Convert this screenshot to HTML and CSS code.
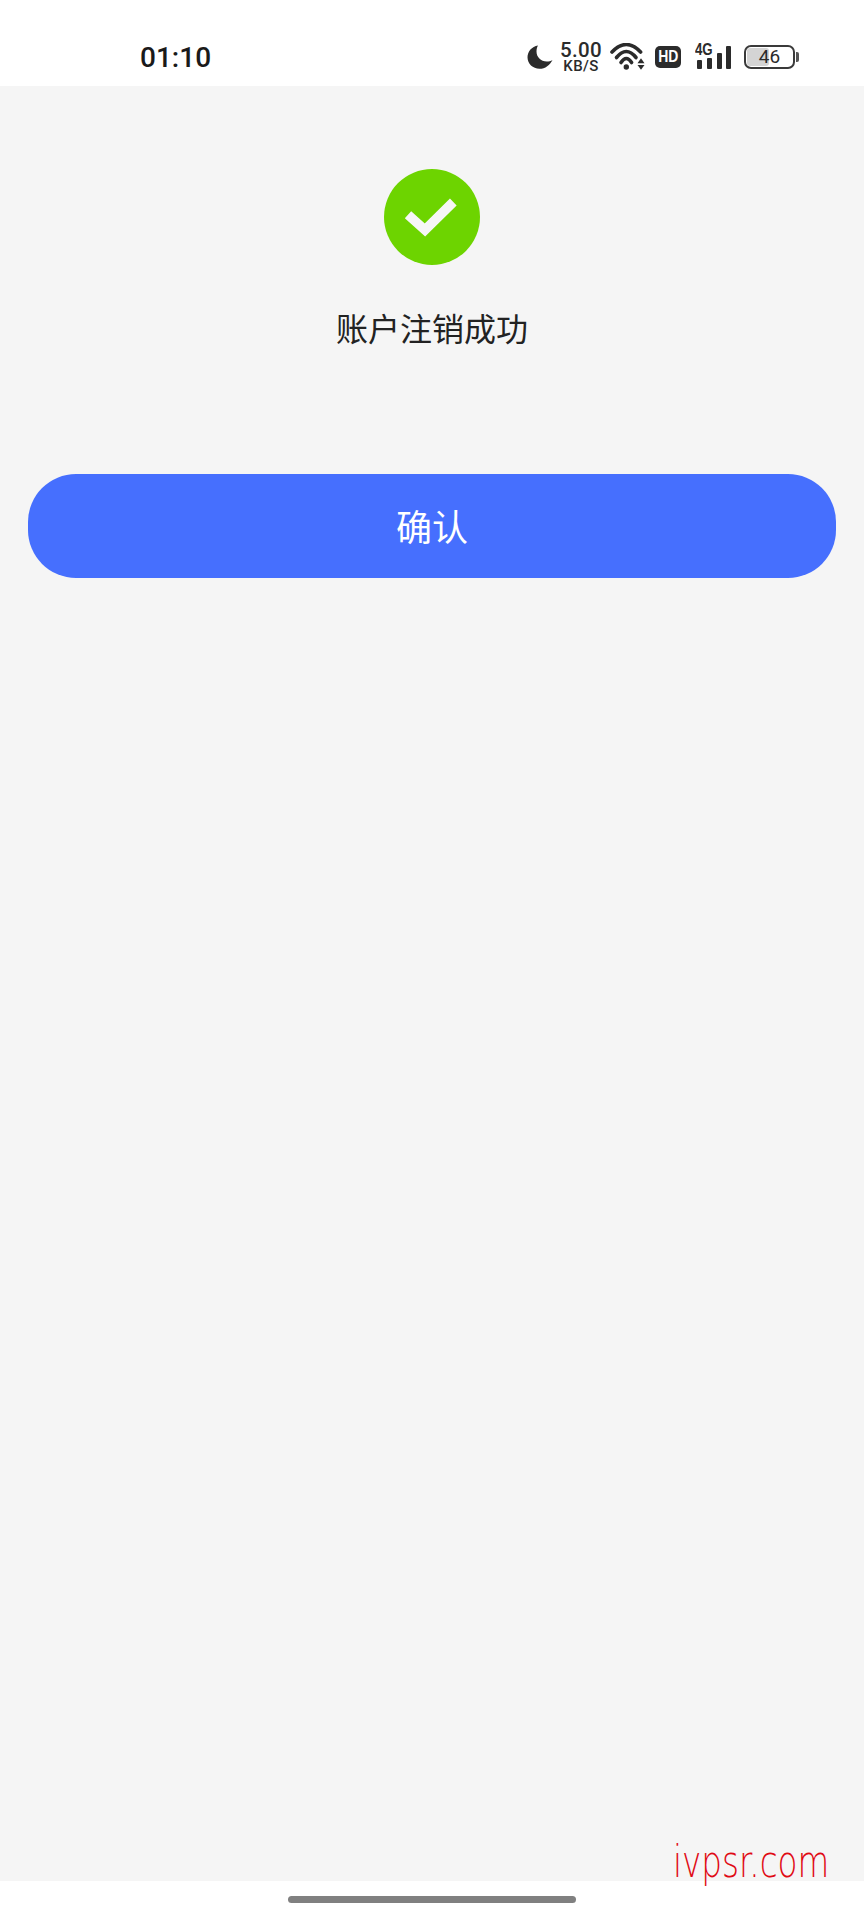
FILE: index.html
```html
<!DOCTYPE html>
<html lang="zh">

<head>
    <meta charset="utf-8">
    <title>账户注销成功</title>
    <link rel="stylesheet" href="styles.css">
</head>

<body>
    <div class="page">
        <div class="status-bar">
            <span class="clock">01:10</span>
            <div class="status-icons">
                <svg class="icon-moon" width="26" height="24" viewBox="0 0 26 24">
                    <path d="M11 0.5 C4.8 1.5 0.5 6.5 0.5 12.3 C0.5 18.8 5.8 23.8 12.5 23.8 C18.2 23.8 23 20.2 25.5 15 C23.8 16 21.8 16.5 19.8 16.5 C13.8 16.5 9.5 12 9.5 6.5 C9.5 4.2 10 2.2 11 0.5 Z" />
                </svg>
                <div class="speed">
                    <span class="speed-value">5.00</span>
                    <span class="speed-unit">KB/S</span>
                </div>
                <svg class="icon-wifi" width="36" height="28" viewBox="0 0 36 28">
                    <path class="arc" d="M2 9 Q16.3 -6 30.6 9" />
                    <path class="arc" d="M6.5 14.5 Q16.3 2.5 26 14.5" />
                    <path class="arc" d="M11 19.5 Q16.3 11.5 21.6 19.5" />
                    <circle cx="16.3" cy="24" r="2.7" />
                    <path d="M27.5 20.3 L31 15.3 L34.5 20.3 Z" />
                    <path d="M27.5 22 H34.5 L31 26.7 Z" />
                </svg>
                <div class="hd-badge"><span>HD</span></div>
                <div class="signal">
                    <span class="net-type">4G</span>
                    <svg width="37" height="26" viewBox="0 0 37 26">
                        <rect x="2" y="16" width="5" height="9" rx="1" />
                        <rect x="12" y="14" width="5" height="11" rx="1" />
                        <rect x="22" y="9" width="5" height="16" rx="1" />
                        <rect x="31" y="2" width="5" height="23" rx="1" />
                    </svg>
                </div>
                <div class="battery">
                    <div class="battery-fill"></div>
                    <span class="battery-level">46</span>
                    <div class="battery-nub"></div>
                </div>
            </div>
        </div>

        <div class="content">
            <div class="success-icon">
                <svg width="56" height="48" viewBox="0 0 56 48">
                    <path d="M4 21.7 L21 37 L49.3 9" />
                </svg>
            </div>
            <p class="message">账户注销成功</p>
            <button class="confirm">确认</button>
        </div>

        <div class="nav-bar">
            <div class="home-bar"></div>
        </div>

        <div class="watermark">ivpsr.com</div>
    </div>
</body>

</html>
```

FILE: styles.css
```css
body {
    margin: 0;
    font-family: "Noto Sans CJK SC", Roboto, sans-serif;
}

.page {
    position: relative;
    width: 864px;
    height: 1920px;
    display: flex;
    flex-direction: column;
    background: #fff;
    overflow: hidden;
}

.status-bar {
    height: 86px;
    box-sizing: border-box;
    padding: 28px 67px 0 140px;
    display: flex;
    align-items: center;
    justify-content: space-between;
}

.clock {
    font-family: Roboto, sans-serif;
    font-size: 28px;
    font-weight: 500;
    color: #1a1a1a;
}

.status-icons {
    display: flex;
    align-items: center;
    gap: 8px;
    color: #2b2b2b;
    fill: #2b2b2b;
}

.icon-moon {
    margin-right: -1px;
}

.speed {
    width: 42px;
    display: flex;
    flex-direction: column;
    align-items: center;
    font-family: Roboto, sans-serif;
    font-weight: 500;
}

.speed-value {
    font-size: 20.5px;
    line-height: 17px;
    letter-spacing: 0.4px;
}

.speed-unit {
    font-size: 15px;
    line-height: 14px;
    letter-spacing: 0.4px;
}

.arc {
    fill: none;
    stroke: #2b2b2b;
    stroke-width: 3.6;
    stroke-linecap: round;
}

.hd-badge {
    width: 26px;
    height: 22px;
    margin-left: 1px;
    border-radius: 5px;
    background: #2b2b2b;
    color: #fff;
    display: flex;
    align-items: center;
    justify-content: center;
    font-family: "Liberation Sans", sans-serif;
    font-size: 17px;
    line-height: 22px;
    font-weight: 700;
}

.hd-badge span {
    transform: scaleX(0.82);
}

.signal {
    position: relative;
    width: 37px;
    height: 26px;
    margin-left: 6px;
}

.net-type {
    position: absolute;
    left: 0;
    top: -3px;
    font-family: "Liberation Sans", sans-serif;
    font-size: 17px;
    line-height: 18px;
    font-weight: 700;
    transform: scaleX(0.78);
    transform-origin: left;
}

.battery {
    position: relative;
    width: 51px;
    height: 24px;
    box-sizing: border-box;
    margin-left: 4px;
    margin-right: 2px;
    border: 2px solid #3a3a3a;
    border-radius: 7px;
    display: flex;
    align-items: center;
    justify-content: center;
}

.battery-fill {
    position: absolute;
    left: 1px;
    top: 1px;
    bottom: 1px;
    width: 22px;
    border-radius: 3px;
    background: #d4d4d4;
}

.battery-level {
    position: relative;
    font-family: Roboto, sans-serif;
    font-size: 19px;
    line-height: 20px;
    color: #2b2b2b;
}

.battery-nub {
    position: absolute;
    right: -6px;
    top: 5px;
    width: 3px;
    height: 10px;
    border-radius: 0 2px 2px 0;
    background: #555;
}

.content {
    flex: 1;
    background: #f5f5f5;
    padding: 83px 28px 0;
    display: flex;
    flex-direction: column;
    align-items: center;
}

.success-icon {
    width: 96px;
    height: 96px;
    border-radius: 50%;
    background: #6dd400;
    display: flex;
    align-items: center;
    justify-content: center;
}

.success-icon path {
    fill: none;
    stroke: #f6f6f6;
    stroke-width: 9.5;
}

.message {
    margin: 40px 0 125px;
    font-size: 32px;
    line-height: 44px;
    font-weight: 400;
    color: #222;
}

.confirm {
    width: 100%;
    height: 104px;
    padding: 0 0 3px;
    border: none;
    border-radius: 48px;
    background: #466ffe;
    color: #fff;
    font-family: inherit;
    font-size: 36px;
    font-weight: 400;
}

.nav-bar {
    height: 39px;
    padding-top: 15px;
    box-sizing: border-box;
    display: flex;
    justify-content: center;
}

.home-bar {
    width: 288px;
    height: 7px;
    border-radius: 4px;
    background: #808080;
}

.watermark {
    position: absolute;
    left: 673px;
    top: 1840px;
    font-family: "DejaVu Sans", sans-serif;
    font-size: 44px;
    line-height: 44px;
    font-weight: 200;
    color: #e00a14;
    transform: scaleX(0.74);
    transform-origin: left;
}
```
